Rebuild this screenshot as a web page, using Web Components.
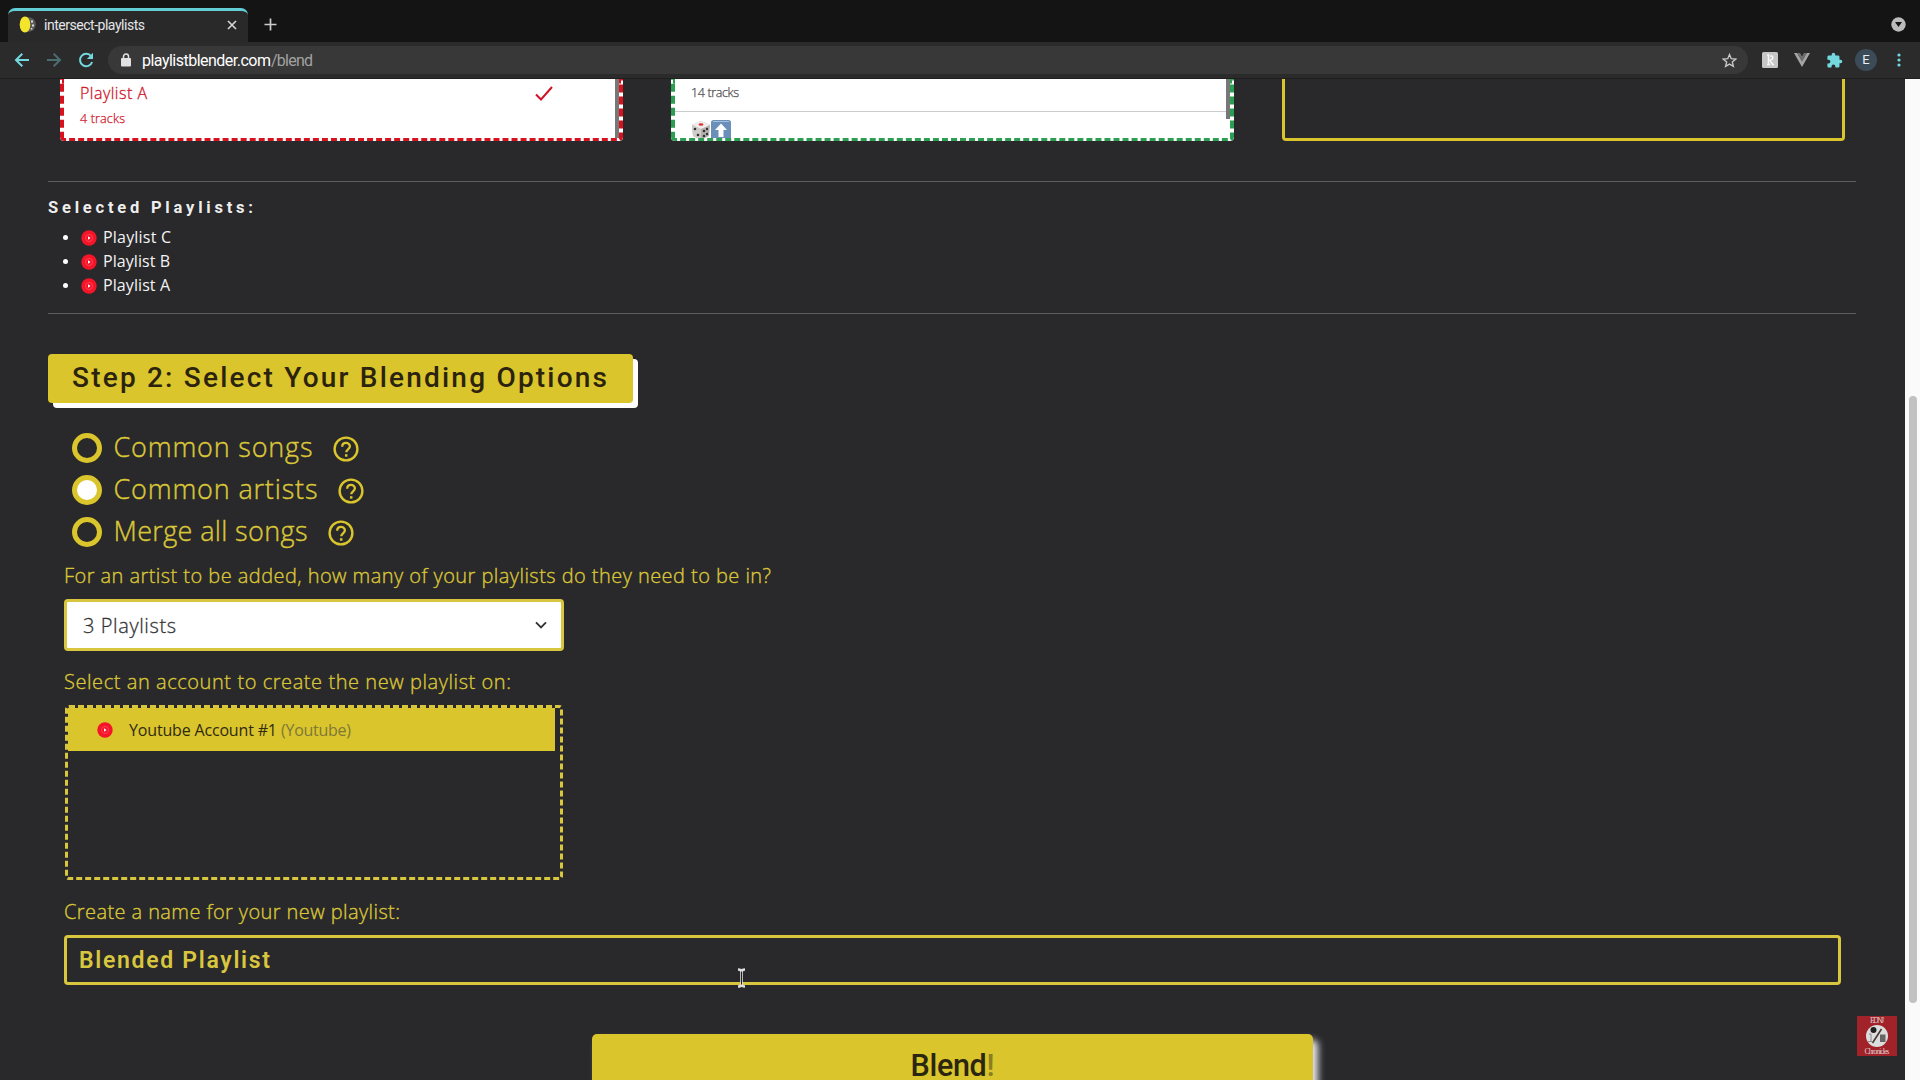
<!DOCTYPE html>
<html lang="en">
<head>
<meta charset="utf-8">
<title>intersect-playlists</title>
<style>
html,body{margin:0;height:100%;overflow:hidden;background:#29282a}
body{font-family:"Open Sans","Liberation Sans",sans-serif;
--gold:#dac52c;--dark:#29282a;--head:Roboto,"Liberation Sans",sans-serif}
</style>
</head>
<body>
<blend-app></blend-app>
<script>
const make=(name,html,after)=>customElements.define(name,class extends HTMLElement{
  connectedCallback(){
    if(this.shadowRoot)return;
    const t=document.createElement('template');
    t.innerHTML=typeof html==='function'?html(this):html;
    this.attachShadow({mode:'open'}).append(t.content.cloneNode(true));
    if(after)after(this);
  }
});

/* A single line of text tracked out so that it fills the given width. */
make('fit-text',`<style>:host{display:block;white-space:nowrap;flex:none}span{display:inline-block}</style><span><slot></slot></span>`,el=>{
  const w=+el.getAttribute('w'),s=el.shadowRoot.querySelector('span');
  el.style.width=w+'px';
  const n=el.textContent.length;
  s.style.letterSpacing='0px';
  const nat=s.getBoundingClientRect().width;
  s.style.letterSpacing=((w-nat)/(n-1)).toFixed(3)+'px';
});

make('yt-dot',`<style>:host{display:block;width:16px;height:16px;flex:none}svg{display:block}</style>
<svg width="16" height="16" viewBox="0 0 16 16"><circle cx="8" cy="8" r="7.7" fill="#f4152a"/><circle cx="8" cy="8" r="3.6" fill="none" stroke="#ff4b58" stroke-width=".8"/><path d="M7 6.300l2.600 1.700L7 9.700z" fill="#fff"/></svg>`);

make('tab-strip',`<style>
:host{display:flex;height:42px;background:#141414;box-sizing:border-box;padding:8px 14px 0 8px;align-items:flex-start}
.tab{display:flex;align-items:center;box-sizing:border-box;width:240px;height:34px;background:#29292a;border-top:3px solid #62cdd5;border-radius:7px 7px 0 0;padding:0 11px 4px 11px;font:14px Roboto,sans-serif;color:#e4e6e8}
.fav{margin-right:8px}.sp{flex:1}
.plus{margin:10px 0 0 16px}
svg{display:block}
</style>
<div class="tab"><svg class="fav" width="17" height="17" viewBox="0 0 17 17"><circle cx="9.500" cy="8.500" r="7.300" fill="#5a5a5a"/><ellipse cx="6" cy="8.500" rx="5.300" ry="8" fill="#f3e52c"/><path d="M12 4.500h2v2h-2zM13 8.500h2v2h-2zM11.800 12h1.500v1.500h-1.500z" fill="#ddd"/></svg><fit-text w="101">intersect-playlists</fit-text><span class="sp"></span>
<svg width="10" height="10" viewBox="0 0 10 10"><path d="M1 1l8 8M9 1l-8 8" stroke="#d6d8da" stroke-width="1.600"/></svg></div>
<svg class="plus" width="13" height="13" viewBox="0 0 13 13"><path d="M6.500 .5v12M.5 6.500h12" stroke="#c9cbcd" stroke-width="1.700"/></svg>
<span class="sp"></span>
<svg style="margin-top:9px" width="15" height="15" viewBox="0 0 15 15"><circle cx="7.500" cy="7.500" r="7.200" fill="#bcbcbc"/><path d="M4 5h7l-3.500 5z" fill="#161616"/></svg>`);

make('tool-bar',`<style>
:host{display:flex;height:37px;box-sizing:border-box;background:#2b2b2c;border-bottom:1px solid #1f1f1f;align-items:flex-start;padding:4px 17px 0 14px}
svg{display:block;flex:none}
.nav{display:flex;gap:16px;padding:6px 0 0 0;width:94px}
.omni{display:flex;align-items:center;box-sizing:border-box;width:1640px;height:28px;border-radius:14px;background:#383838;padding:0 11px 0 12px;font:16px Roboto,sans-serif;color:#fff}
.omni i{font-style:normal;color:#a2a2a2}.sp{flex:1}
.ext{display:flex;align-items:center;height:28px;flex:1}
.e{width:22px;height:22px;border-radius:50%;background:#3b4b57;color:#e8eef2;font:13px/22px Roboto,sans-serif;text-align:center}
</style>
<div class="nav">
<svg width="16" height="16" viewBox="0 0 16 16"><path d="M15 8H2.500M8.300 1.800L2 8l6.300 6.200" fill="none" stroke="#74d8df" stroke-width="2"/></svg>
<svg width="16" height="16" viewBox="0 0 16 16"><path d="M1 8h12.500M7.700 1.800L14 8l-6.300 6.200" fill="none" stroke="#4a6d70" stroke-width="2"/></svg>
<svg width="16" height="16" viewBox="0 0 16 16"><path d="M13.200 4.300A6.200 6.200 0 1 0 14.100 10" fill="none" stroke="#74d8df" stroke-width="2"/><path d="M15 .8v6.200H8.800z" fill="#74d8df"/></svg>
</div>
<div class="omni">
<svg width="12" height="14" viewBox="0 0 12 14" style="margin-right:10px"><rect x="1" y="5" width="10" height="8.500" rx="1" fill="#e2e2e2"/><path d="M3.500 5.500V3.500a2.500 2.500 0 0 1 5 0v2" fill="none" stroke="#e2e2e2" stroke-width="1.500"/></svg>
<fit-text w="129">playlistblender.com</fit-text><fit-text w="42"><i>/blend</i></fit-text><span class="sp"></span>
<svg width="15" height="15" viewBox="0 0 24 24"><path d="M12 2.500l2.800 6.600 7.200.6-5.500 4.700 1.700 7L12 17.700l-6.200 3.700 1.700-7L2 9.700l7.200-.6z" fill="none" stroke="#c8c8c8" stroke-width="2.200"/></svg>
</div>
<div class="ext">
<svg width="16" height="16" viewBox="0 0 16 16" style="margin-left:14px"><rect width="16" height="16" rx="1.500" fill="#c6c6c6"/><path d="M5 3h1.500v9.500M5 12.500h3M8 4q4-.5 2.500 3L8 8.200l2.500 4.300h1.500" fill="none" stroke="#f7f7f7" stroke-width="1.500"/></svg>
<svg width="16" height="14" viewBox="0 0 16 14" style="margin-left:16px"><path d="M0 0h3.200L8 8.300 12.800 0H16L8 14z" fill="#a5a5a5"/><path d="M3.200 0H6l2 3.500L10 0h2.800L8 8.300z" fill="#707070"/></svg>
<svg width="17" height="17" viewBox="0 0 24 24" style="margin-left:16px"><path d="M20.500 11H19V7c0-1.100-.9-2-2-2h-4V3.500a2.500 2.500 0 0 0-5 0V5H4c-1.100 0-2 .9-2 2v3.800h1.500a2.700 2.700 0 0 1 0 5.400H2V20c0 1.100.9 2 2 2h3.800v-1.500a2.700 2.700 0 0 1 5.400 0V22H17c1.100 0 2-.9 2-2v-4h1.500a2.500 2.500 0 0 0 0-5z" fill="#74d8df"/></svg>
<div class="e" style="margin-left:12px">E</div>
<svg width="4" height="16" viewBox="0 0 4 16" style="margin-left:20px"><circle cx="2" cy="3" r="1.600" fill="#74d8df"/><circle cx="2" cy="8" r="1.600" fill="#74d8df"/><circle cx="2" cy="13" r="1.600" fill="#74d8df"/></svg>
</div>`);

/* The lower edge of a playlist column, its list scrolled under the toolbar. */
make('playlist-card',el=>`<style>
:host{display:block;box-sizing:border-box;width:563px;height:62px;overflow:hidden;border-radius:0 0 4px 4px;background:#fff;color:#4c4c4c}
:host([kind=red]){color:#d0142a}
:host([kind=empty]){background:none;border:3px solid var(--gold);border-top:0}
.f{display:flex;height:100%;box-sizing:border-box;border:4px dashed #d5121e;border-bottom-width:3px;border-top:0;border-radius:0 0 4px 4px}
:host([kind=green]) .f{border-color:#2b9e52}
:host([kind=empty]) .f{border:0}
.b{flex:1;overflow:hidden}
.s{width:4px;background:${el.getAttribute('kind')==='empty'?'none':'#777'};height:${el.getAttribute('kind')==='green'?'40px':'auto'}}
</style><div class="f"><div class="b"><slot></slot></div><div class="s"></div></div>`);

make('rule-line',`<style>:host{display:block;height:1px;background:#5c5c5d}</style>`);

make('selected-list',`<style>
:host{display:block;color:#fff;font-size:16px}
h3{margin:0;font:700 16.500px/26px var(--head);height:25px;color:#eee}
.r{display:flex;align-items:center;height:24px;padding-left:15px;line-height:24px}
.r::before{content:"";width:5px;height:5px;border-radius:50%;background:#fff;margin-right:12px}
yt-dot{margin-right:7px;position:relative;left:.5px;top:1px}
.r fit-text{color:#f4f4f4}
</style><h3><fit-text w="205">Selected Playlists:</fit-text></h3><div style="height:5px"></div>
${['C','B','A'].map(x=>`<div class="r"><yt-dot></yt-dot><fit-text w="${x==='C'?68:67}">Playlist ${x}</fit-text></div>`).join('')}`);

make('step-banner',`<style>:host{display:block;box-sizing:border-box;width:585px;height:49px;border-radius:4px;background:var(--gold);box-shadow:5px 5px 0 #fff;padding-left:24px;color:#2c230e;font:500 28px/47px var(--head)}</style><slot></slot>`);

make('blend-option',`<style>
:host{display:flex;align-items:center;height:42px;color:#dac738;font-weight:300;-webkit-text-stroke:.4px #dac738;font-size:27px}
.c{box-sizing:border-box;width:30px;height:30px;border-radius:50%;border:5px solid var(--gold);margin-right:11.500px}
:host([checked]) .c{background:#fff}
svg{display:block;margin:2px 0 0 20px}
.t{line-height:42px;margin-top:-2px}
</style><span class="c"></span><div class="t"><slot></slot></div>
<svg width="26" height="26" viewBox="0 0 26 26" fill="none" stroke="#dac52c"><circle cx="13" cy="13" r="11.400" stroke-width="2.400"/><path d="M9.200 10.700c0-5 7.700-4.800 7.700-.4 0 2.900-3.700 3.100-3.700 6" stroke-width="2.300"/><path d="M13.200 18.200v2.500" stroke-width="2.500"/></svg>`);

make('field-label',`<style>:host{display:block;height:28px;line-height:28px;font-size:20px;color:#dac738;font-weight:300;-webkit-text-stroke:.35px #dac738}</style><slot></slot>`);

make('count-select',`<style>:host{display:flex;align-items:center;justify-content:space-between;box-sizing:border-box;width:500px;height:52px;border:3px solid #d8c63f;border-radius:4px;background:#fff;padding:0 14px 0 16px;font-size:20px;font-weight:300;-webkit-text-stroke:.3px #333;color:#333}</style><slot></slot>
<svg width="12" height="8" viewBox="0 0 12 8"><path d="M1 1.300l5 5 5-5" fill="none" stroke="#343434" stroke-width="1.900"/></svg>`);

make('account-box',`<style>:host{display:block;box-sizing:border-box;width:498px;height:175px;border:3px dashed #d8c63f;border-radius:4px}
.i{display:flex;align-items:center;width:487px;height:43px;box-sizing:border-box;background:var(--gold);padding-left:29px;font-size:16px;font-weight:400;color:#302a12}
yt-dot{margin-right:16px}.m{color:#807837;margin-left:4px}</style>
<div class="i"><yt-dot></yt-dot><fit-text w="148">Youtube Account #1</fit-text><fit-text class="m" w="70">(Youtube)</fit-text></div>`);

make('name-input',`<style>:host{display:block;box-sizing:border-box;width:1777px;height:50px;border:3px solid #d8c63f;border-radius:4px;padding-left:12px;font:600 23px/45px var(--head);color:#d8c63f}</style><slot></slot>`);

make('blend-button',`<style>:host{display:flex;justify-content:center;box-sizing:border-box;width:721px;height:60px;border-radius:5px;background:var(--gold);box-shadow:5px 6px 7px #e9e9f2;color:#2b260f;font:500 30.500px/64px var(--head)}</style><slot></slot>`);

make('page-scrollbar',`<style>:host{display:block;box-sizing:border-box;width:15px;background:#fafafa;padding:317px 3px 0 4px}div{height:607px;border-radius:4px;background:#c1c1c1}</style><div></div>`);

make('channel-badge',`<style>:host{display:flex;flex-direction:column;align-items:center;width:40px;height:40px;background:#a12329;color:#ddc9c9;font:8px/9px "Liberation Serif",serif}svg{display:block}</style>
<fit-text w="14">EDNJ</fit-text>
<svg width="24" height="22" viewBox="0 0 24 22"><circle cx="12" cy="11" r="11" fill="#ddd"/><circle cx="8.500" cy="5" r="3" fill="#1f1f1f"/><path d="M16.500 4L7.500 18" stroke="#443a32" stroke-width="1.600"/><rect x="15" y="9.500" width="5.500" height="7.500" fill="#666"/><path d="M4 9h2v7M3 16.500h4" fill="none" stroke="#888"/></svg>
<fit-text w="25">Chronicles</fit-text>`);

make('text-cursor',`<style>:host{display:block;position:absolute;left:737px;top:968px}svg{display:block}</style>
<svg width="9" height="20" viewBox="0 0 9 20" fill="none"><path d="M1 1.500q3.500 0 3.500 2.500 0-2.500 3.500-2.500M4.500 4v12M1 18.500q3.500 0 3.500-2.500 0 2.500 3.500 2.500" stroke="#ddd" stroke-width="2.600"/><path d="M4.500 3.500v13" stroke="#222" stroke-width="1"/></svg>`);

make('blend-app',`<style>
:host{display:flex;flex-direction:column;width:1920px;height:1080px;overflow:hidden;position:relative;background:var(--dark)}
.view{display:flex;flex:1;min-height:0;overflow:hidden}
main{flex:1;padding:0 49px 0 48px;overflow:hidden}
.cards{display:flex;gap:48px;padding-left:12px;height:102px}
.pa{display:flex;height:28px;line-height:28px;padding:0 62px 0 16px;align-items:center;justify-content:space-between;font-size:16px;font-weight:300;-webkit-text-stroke:.3px}
.tr{font-size:12.500px;line-height:23px;padding-left:16px;font-weight:300;-webkit-text-stroke:.25px}
.hr{height:1px;background:#ccc}
.em{display:flex;padding:8px 0 0 16px}
.em svg{display:block}
.opts{padding:24px 0 0 24px}
.form{padding-left:16px}
.ex{color:#8b7e22}
channel-badge{position:absolute;left:1857px;top:1016px}
</style>
<tab-strip></tab-strip><tool-bar></tool-bar>
<div class="view"><main>
<div class="cards">
<playlist-card kind="red"><div class="pa"><fit-text w="67">Playlist A</fit-text><svg width="18" height="15" viewBox="0 0 18 15"><path d="M1 8.500l5 5L17 1" fill="none" stroke="#d01226" stroke-width="2"/></svg></div><div class="tr"><fit-text w="45">4 tracks</fit-text></div></playlist-card>
<playlist-card kind="green"><div class="tr" style="padding-top:2px;height:30px"><fit-text w="48">14 tracks</fit-text></div><div class="hr"></div><div class="em">
<svg width="20" height="20" viewBox="0 0 20 20"><path d="M10 1l9 4-1 11-8 4-8-4L1 5z" fill="#b5b1ae"/><path d="M10 1l9 4-9 4-9-4z" fill="#eee"/><path d="M1 5l9 4v11l-8-4z" fill="#cfccca"/><ellipse cx="10" cy="4.500" rx="2.500" ry="1.200" fill="#d33"/><g fill="#333"><circle cx="4" cy="9" r="1.300"/><circle cx="7" cy="15" r="1.300"/><circle cx="13" cy="11" r="1.300"/><circle cx="16" cy="9" r="1.200"/><circle cx="13" cy="16" r="1.300"/><circle cx="16" cy="14" r="1.200"/></g></svg>
<svg width="20" height="20" viewBox="0 0 20 20"><rect width="20" height="20" rx="2.500" fill="#6a8fb8"/><rect x="2" y="1" width="16" height="1" fill="#a9c0d8"/><path d="M10 3.500l6 6.500h-3.500v7h-5v-7H4z" fill="#fff"/></svg>
</div></playlist-card>
<playlist-card kind="empty"></playlist-card>
</div>
<rule-line></rule-line>
<selected-list style="margin-top:13px"></selected-list>
<rule-line style="margin-top:16px"></rule-line>
<step-banner style="margin-top:40px"><fit-text w="535">Step 2: Select Your Blending Options</fit-text></step-banner>
<div class="opts">
<blend-option><fit-text w="199">Common songs</fit-text></blend-option>
<blend-option checked><fit-text w="204">Common artists</fit-text></blend-option>
<blend-option><fit-text w="194">Merge all songs</fit-text></blend-option>
</div>
<div class="form">
<field-label style="margin-top:9px"><fit-text w="707">For an artist to be added, how many of your playlists do they need to be in?</fit-text></field-label>
<count-select style="margin-top:9px"><fit-text w="93">3 Playlists</fit-text></count-select>
<field-label style="margin-top:17px"><fit-text w="447">Select an account to create the new playlist on:</fit-text></field-label>
<account-box style="margin:9px 0 0 1px"></account-box>
<field-label style="margin-top:18px"><fit-text w="336">Create a name for your new playlist:</fit-text></field-label>
<name-input style="margin-top:9px"><fit-text w="191">Blended Playlist</fit-text></name-input>
<blend-button style="margin:49px 0 0 528px"><fit-text w="84">Blend<span class="ex">!</span></fit-text></blend-button>
</div>
</main><page-scrollbar></page-scrollbar></div>
<channel-badge></channel-badge><text-cursor></text-cursor>`);
</script>
</body>
</html>
